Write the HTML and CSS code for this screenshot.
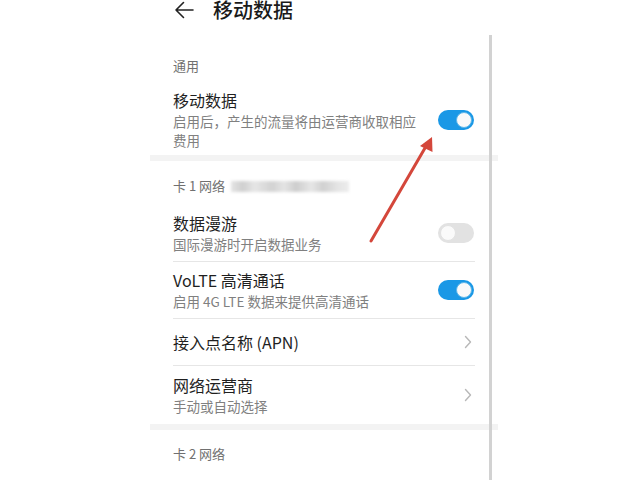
FILE: index.html
```html
<!DOCTYPE html>
<html lang="zh-CN">
<head>
<meta charset="utf-8">
<title>移动数据</title>
<link rel="stylesheet" href="styles.css">
</head>
<body>
<div class="phone">
  <header class="topbar">
    <svg class="back" width="20" height="18" viewBox="0 0 20 18"><path d="M19 9H2M9.5 1.5L2 9l7.5 7.5" fill="none" stroke="#222" stroke-width="1.6" stroke-linecap="round" stroke-linejoin="round"/></svg>
    <h1 class="title">移动数据</h1>
  </header>

  <div class="section-label first">通用</div>
  <div class="row row-tall">
    <div class="row-text">
      <div class="row-title">移动数据</div>
      <div class="row-sub">启用后，产生的流量将由运营商收取相应<br>费用</div>
    </div>
    <span class="toggle on"></span>
  </div>

  <div class="band"></div>

  <div class="section-label card1">卡 1 网络 <span class="blurred"></span></div>
  <div class="row">
    <div class="row-inner">
      <div class="row-text">
        <div class="row-title">数据漫游</div>
        <div class="row-sub">国际漫游时开启数据业务</div>
      </div>
      <span class="toggle"></span>
    </div>
  </div>
  <div class="row">
    <div class="row-inner">
      <div class="row-text">
        <div class="row-title">VoLTE 高清通话</div>
        <div class="row-sub">启用 4G LTE 数据来提供高清通话</div>
      </div>
      <span class="toggle on"></span>
    </div>
  </div>
  <div class="row">
    <div class="row-inner short">
      <div class="row-text">
        <div class="row-title">接入点名称 (APN)</div>
      </div>
      <svg class="chev" width="8" height="14" viewBox="0 0 8 14"><path d="M1.5 1.5L6.5 7l-5 5.5" fill="none" stroke="#b8b8b8" stroke-width="1.4" stroke-linecap="round" stroke-linejoin="round"/></svg>
    </div>
  </div>
  <div class="row">
    <div class="row-inner last">
      <div class="row-text">
        <div class="row-title">网络运营商</div>
        <div class="row-sub">手动或自动选择</div>
      </div>
      <svg class="chev" width="8" height="14" viewBox="0 0 8 14"><path d="M1.5 1.5L6.5 7l-5 5.5" fill="none" stroke="#b8b8b8" stroke-width="1.4" stroke-linecap="round" stroke-linejoin="round"/></svg>
    </div>
  </div>

  <div class="band"></div>

  <div class="section-label card2">卡 2 网络</div>

  <div class="scrollbar"></div>
</div>

<svg class="annot" width="640" height="480" viewBox="0 0 640 480">
  <line x1="371" y1="241" x2="425" y2="148" stroke="#d4473b" stroke-width="3" stroke-linecap="round"/>
  <path d="M432 137L432.5 152L420 146Z" fill="#d4473b"/>
</svg>
</body>
</html>
```

FILE: styles.css
```css
html, body {
  margin: 0;
  padding: 0;
  background: #fff;
}
body {
  width: 640px;
  height: 480px;
  overflow: hidden;
  position: relative;
  font-family: "Noto Sans CJK SC", "Noto Sans", sans-serif;
  color: #1f1f1f;
}
.phone {
  margin-left: 150px;
  width: 348px;
  position: relative;
  height: 480px;
}
.topbar {
  display: flex;
  align-items: flex-start;
  height: 24px;
  padding-left: 24px;
}
.back {
  display: block;
  margin-top: 1px;
}
.title {
  margin: 0 0 0 19px;
  font-size: 20px;
  font-weight: 500;
  line-height: 20px;
  color: #1a1a1a;
}
.section-label {
  font-size: 13px;
  line-height: 20px;
  color: #707070;
  padding-left: 23px;
}
.section-label.first {
  padding-top: 32px;
}
.section-label.card1 {
  padding-top: 15px;
  padding-bottom: 9px;
  display: flex;
  align-items: center;
}
.section-label.card2 {
  padding-top: 14px;
}
.blurred {
  display: inline-block;
  width: 118px;
  height: 11px;
  margin-left: 6px;
  background: linear-gradient(90deg, #e4e4e4 0%, #cfcfcf 10%, #e6e6e6 20%, #d2d2d2 35%, #e4e4e4 45%, #cdcdcd 55%, #e6e6e6 68%, #d0d0d0 78%, #e4e4e4 90%, #ececec 100%);
  filter: blur(1.5px);
}
.row {
  padding: 0 23px;
}
.row-tall {
  display: flex;
  align-items: center;
  padding-top: 13px;
  padding-bottom: 5px;
}
.row-inner {
  display: flex;
  align-items: center;
  height: 56px;
  border-bottom: 1px solid #e6e6e6;
}
.row-inner.short {
  height: 46px;
}
.row-inner.last {
  height: 58px;
  border-bottom: none;
}
.row-text {
  flex: 1;
}
.row-title {
  font-size: 16px;
  line-height: 22px;
  color: #1f1f1f;
}
.row-sub {
  font-size: 13.5px;
  line-height: 19px;
  margin-top: 1px;
  color: #808080;
}
.toggle {
  position: relative;
  width: 36px;
  height: 20px;
  border-radius: 10px;
  background: #e2e2e2;
  flex: none;
  margin-right: 1px;
}
.toggle::after {
  content: "";
  position: absolute;
  top: 2px;
  left: 2px;
  width: 14px;
  height: 14px;
  border-radius: 50%;
  background: #fafafa;
  border: 1px solid #e2e2e2;
}
.toggle.on {
  background: #1a98e6;
}
.toggle.on::after {
  left: auto;
  right: 2px;
  border-color: #5fb6e8;
}
.chev {
  display: block;
  margin-right: 3px;
}
.band {
  height: 6px;
  background: #f3f3f3;
}
.scrollbar {
  position: absolute;
  left: 339px;
  top: 35px;
  width: 3px;
  height: 445px;
  background: #d2d2d2;
}
.annot {
  position: absolute;
  left: 0;
  top: 0;
  pointer-events: none;
}
```
